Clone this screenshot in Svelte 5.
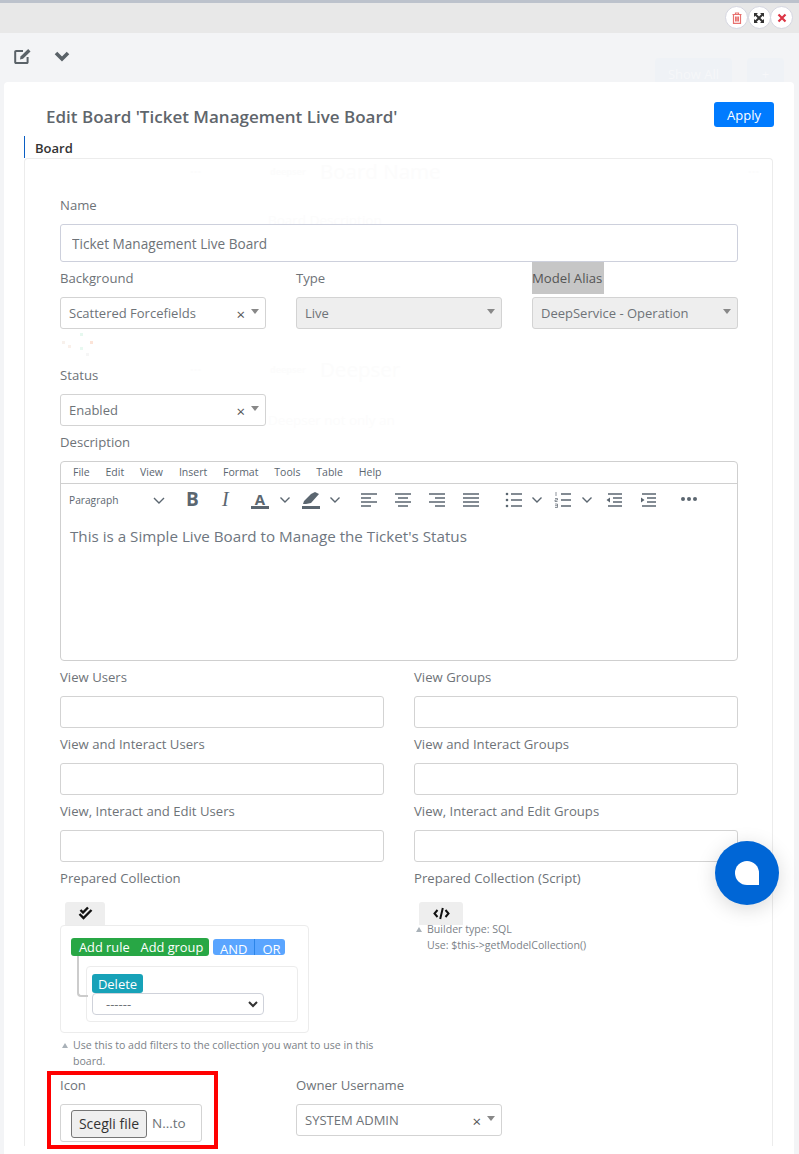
<script>
    const peopleRows = [
        [ 'View Users', 'View Groups' ],
        [ 'View and Interact Users', 'View and Interact Groups' ],
        [ 'View, Interact and Edit Users', 'View, Interact and Edit Groups' ]
    ];

    const menu = [ 'File', 'Edit', 'View', 'Insert', 'Format', 'Tools', 'Table', 'Help' ];

    // Dots of the background preview, barely visible
    const dots = [ [ 20, 0, '#e6f8ef' ], [ 30, 8, '#fce4d8' ], [ 8, 12, '#faf0ea' ], [ 20, 14, '#e8f9f1' ], [ 2, 8, '#f8f1ec' ], [ 26, 20, '#f6f6f6' ] ];
</script>

<div class="page">
    <div class="strip"></div>
    <div class="topbar">
        <button class="round" aria-label="Delete">
            <svg width="12" height="12" viewBox="0 0 12 12" fill="none" stroke="#e8716f" stroke-width="1.2"><path d="M1.5 2.5h9M4.5 2.5V1h3v1.5M2.5 2.5v8.8h7V2.5M4.6 4.5v5M6 4.5v5M7.4 4.5v5"/></svg>
        </button>
        <button class="round" aria-label="Expand">
            <svg width="12" height="12" viewBox="0 0 12 12" fill="#333"><path d="M1 1h4L3.7 2.3 6 4.6 8.3 2.3 7 1h4v4L9.7 3.7 7.4 6l2.3 2.3L11 7v4H7l1.3-1.3L6 7.4 3.7 9.7 5 11H1V7l1.3 1.3L4.6 6 2.3 3.7 1 5z"/></svg>
        </button>
        <button class="round" aria-label="Close">
            <svg width="10" height="10" viewBox="0 0 10 10" stroke="#dc3545" stroke-width="2.2"><path d="M1.5 1.5l7 7M8.5 1.5l-7 7"/></svg>
        </button>
    </div>

    <div class="tools">
        <svg width="18" height="16" viewBox="0 0 18 16" fill="none"><path d="M9 3H2.2A.9.9 0 0 0 1.2 4v10a.9.9 0 0 0 1 1h10.400a.9.9 0 0 0 1-1V9" stroke="#5a6268" stroke-width="2"/><path d="M6.500 8.500l7.700-7.400 2.300 2.300-7.500 7.400-3 .6z" fill="#5a6268"/></svg>
        <svg width="16" height="12" viewBox="0 0 16 12" fill="none"><path d="M2 3l6 6 6-6" stroke="#5a6268" stroke-width="3.600"/></svg>
        <span class="ghost-btn wide">Show All</span>
        <span class="ghost-btn">+</span>
    </div>

    <main class="card">
        <header class="head">
            <h1>Edit Board 'Ticket Management Live Board'</h1>
            <button class="apply">Apply</button>
        </header>

        <div class="legend">Board</div>

        <section class="box">
            <div class="ghosts" aria-hidden="true">
                <span class="g-dots one">...</span>
                <span class="g-dots one end">...</span>
                <span class="g-logo one">deepser</span>
                <span class="g-big one">Board Name</span>
                <span class="g-small one">Board Description</span>
                <span class="g-dots two">...</span>
                <span class="g-logo two">deepser</span>
                <span class="g-big two">Deepser</span>
                <span class="g-small two">Deepser not only an</span>
            </div>

            <div class="field">
                <label for="name">Name</label>
                <input id="name" class="tall" value="Ticket Management Live Board" />
            </div>

            <div class="three">
                <div class="field">
                    <span class="lab">Background</span>
                    <div class="sel">Scattered Forcefields<i class="x">×</i><i class="caret"></i></div>
                </div>
                <div class="field">
                    <span class="lab">Type</span>
                    <div class="sel off">Live<i class="caret"></i></div>
                </div>
                <div class="field">
                    <span class="lab picked">Model Alias</span>
                    <div class="sel off">DeepService - Operation<i class="caret"></i></div>
                </div>
            </div>

            <div class="preview">
                {#each dots as d}
                    <i style="left: {d[0]}px; top: {d[1]}px; background: {d[2]}"></i>
                {/each}
            </div>

            <div class="three">
                <div class="field">
                    <span class="lab">Status</span>
                    <div class="sel">Enabled<i class="x">×</i><i class="caret"></i></div>
                </div>
            </div>

            <div class="field desc">
                <span class="lab">Description</span>
                <div class="editor">
                    <div class="menubar">
                        {#each menu as m}<span>{m}</span>{/each}
                    </div>
                    <div class="toolbar">
                        <span class="para">Paragraph</span>
                        <svg class="chev c-para" width="12" height="8" viewBox="0 0 12 8"><path d="M1 1l5 5 5-5"/></svg>
                        <b class="t-b">B</b>
                        <em class="t-i">I</em>
                        <svg class="ic up" style="left: 189px" width="20" height="22" viewBox="0 -2 20 22"><text x="10" y="14" text-anchor="middle" class="a">A</text><rect x="1" y="15" width="18" height="3" fill="#5b6670"/></svg>
                        <svg class="chev" style="left: 219px" width="10" height="7" viewBox="0 0 10 7"><path d="M.5.5l4.500 4.500L9.500.5"/></svg>
                        <svg class="ic" style="left: 240px" width="20" height="20" viewBox="0 0 20 20" fill="#5b6670"><path d="M2 13l1-3 7-7 4-2 4 2-8 9-5 1zM1 15h18v3H1z"/></svg>
                        <svg class="chev" style="left: 269px" width="10" height="7" viewBox="0 0 10 7"><path d="M.5.5l4.500 4.500L9.500.5"/></svg>

                        <svg class="ic lines" style="left: 299px" width="18" height="16" viewBox="0 0 18 16"><path d="M1 2h16M1 6h10M1 10h16M1 14h10"/></svg>
                        <svg class="ic lines" style="left: 333px" width="18" height="16" viewBox="0 0 18 16"><path d="M1 2h16M4 6h10M1 10h16M4 14h10"/></svg>
                        <svg class="ic lines" style="left: 367px" width="18" height="16" viewBox="0 0 18 16"><path d="M1 2h16M7 6h10M1 10h16M7 14h10"/></svg>
                        <svg class="ic lines" style="left: 401px" width="18" height="16" viewBox="0 0 18 16"><path d="M1 2h16M1 6h16M1 10h16M1 14h16"/></svg>

                        <svg class="ic lines" style="left: 444px" width="18" height="16" viewBox="0 0 18 16"><path d="M6 2h11M6 8h11M6 14h11"/><g class="fillg"><circle cx="2" cy="2" r="1.300"/><circle cx="2" cy="8" r="1.300"/><circle cx="2" cy="14" r="1.300"/></g></svg>
                        <svg class="chev" style="left: 471px" width="10" height="7" viewBox="0 0 10 7"><path d="M.5.5l4.500 4.500L9.500.5"/></svg>
                        <svg class="ic lines" style="left: 493px" width="18" height="16" viewBox="0 0 18 16"><path d="M7 2h10M7 8h10M7 14h10"/><path class="num" d="M2 0v4M1 6.500h2.500v1.500H1v1.500h2.500M1 12h2.500v3.500H1M1 13.700h2.500"/></svg>
                        <svg class="chev" style="left: 521px" width="10" height="7" viewBox="0 0 10 7"><path d="M.5.5l4.500 4.500L9.500.5"/></svg>
                        <svg class="ic lines" style="left: 544px" width="18" height="16" viewBox="0 0 18 16"><path d="M3 2h14M8 6h9M8 10h9M3 14h14"/><path d="M5 5.500L1.500 8 5 10.500z" class="fillp"/></svg>
                        <svg class="ic lines" style="left: 578px" width="18" height="16" viewBox="0 0 18 16"><path d="M3 2h14M8 6h9M8 10h9M3 14h14"/><path d="M2 5.500L5.500 8 2 10.500z" class="fillp"/></svg>
                        <svg class="ic" style="left: 619px" width="18" height="16" viewBox="0 0 18 16" fill="#5b6670"><circle cx="3" cy="8" r="2"/><circle cx="9" cy="8" r="2"/><circle cx="15" cy="8" r="2"/></svg>
                    </div>
                    <p class="content">This is a Simple Live Board to Manage the Ticket's Status</p>
                </div>
            </div>

            {#each peopleRows as row}
                <div class="two-col">
                    {#each row as name}
                        <div class="field">
                            <span class="lab">{name}</span>
                            <input />
                        </div>
                    {/each}
                </div>
            {/each}

            <div class="two-col">
                <div class="field">
                    <span class="lab">Prepared Collection</span>
                    <div class="qb-wrap">
                        <span class="tab t-check">
                            <svg width="15" height="15" viewBox="0 0 15 15" fill="none" stroke="#111" stroke-width="2.400"><path d="M2.500 4l2.500 2.500 5-5M1.500 8l4 4 8-8"/></svg>
                        </span>
                        <div class="qb">
                            <div class="qb-top">
                                <div class="green"><span>Add rule</span><span>Add group</span></div>
                                <div class="blue"><span>AND</span><span>OR</span></div>
                            </div>
                            <div class="qb-rule">
                                <span class="del">Delete</span>
                                <div class="dash">------<svg width="10" height="7" viewBox="0 0 10 7" fill="none" stroke="#333" stroke-width="2"><path d="M1 1l4 4 4-4"/></svg></div>
                            </div>
                        </div>
                    </div>
                    <p class="hint">Use this to add filters to the collection you want to use in this board.</p>
                </div>
                <div class="field">
                    <span class="lab">Prepared Collection (Script)</span>
                    <div class="qb-wrap">
                        <span class="tab t-code">
                            <svg width="17" height="13" viewBox="0 0 17 13" fill="none" stroke="#111" stroke-width="2"><path d="M4.500 3L1.500 6.500l3 3.500M12.500 3l3 3.500-3 3.500M9.800 1L7.200 12"/></svg>
                        </span>
                    </div>
                    <p class="hint tight">Builder type: SQL<br />Use: $this-&gt;getModelCollection()</p>
                </div>
            </div>

            <div class="three last">
                <div class="field marked">
                    <span class="lab">Icon</span>
                    <div class="file"><span class="pick">Scegli file</span><span>N...to</span></div>
                </div>
                <div class="field">
                    <span class="lab">Owner Username</span>
                    <div class="sel">SYSTEM ADMIN<i class="x">×</i><i class="caret"></i></div>
                </div>
            </div>
        </section>
    </main>

    <div class="chat"><i></i></div>
</div>

<style>
    :global(body)
    {
        margin: 0;
        background: #f3f4f6;
    }

    .page
    {
        position: relative;
        width: 799px;
        height: 1154px;
        overflow: hidden;
        font-family: "Open Sans", "Liberation Sans", sans-serif;
        font-size: 13px;
        color: #6e7378;
        background: #f3f4f6;
    }

    .strip
    {
        height: 3px;
        background: #bcc2cc;
    }

    .topbar
    {
        height: 30px;
        display: flex;
        justify-content: flex-end;
        padding: 3px 6px 0 0;
        box-sizing: border-box;
        background: #e8e8e8;
    }

    .round
    {
        width: 23px;
        height: 23px;
        padding: 0;
        margin-left: -.5px;
        display: flex;
        align-items: center;
        justify-content: center;
        background: #fff;
        border: 1px solid #d5d6e0;
        border-radius: 50%;
    }

    .tools
    {
        height: 49px;
        position: relative;
        display: flex;
        align-items: center;
        gap: 22px;
        padding: 0 0 3px 14px;
        box-sizing: border-box;
    }

    .ghost-btn
    {
        position: absolute;
        top: 25px;
        left: 747px;
        width: 37px;
        height: 32px;
        line-height: 32px;
        text-align: center;
        color: #f6f7f9;
        background: #eff2f6;
        border-radius: 4px;
    }

    .ghost-btn.wide
    {
        left: 655px;
        width: 77px;
    }

    .card
    {
        position: relative;
        margin: 0 5px 0 4px;
        height: 1072px;
        padding: 20px 20px 0;
        box-sizing: border-box;
        background: #fff;
        border-radius: 4px 4px 0 0;
    }

    .head
    {
        display: flex;
        justify-content: space-between;
        align-items: flex-start;
        height: 34px;
        padding-left: 22px;
    }

    h1
    {
        margin: 3px 0 0;
        font-size: 17px;
        line-height: 24px;
        font-weight: 600;
        color: #5f666c;
    }

    .apply
    {
        width: 60px;
        height: 25px;
        padding: 0;
        color: #fff;
        font: inherit;
        background: #007bff;
        border: 0;
        border-radius: 3px;
    }

    .legend
    {
        height: 22px;
        padding-left: 10px;
        font-size: 13px;
        line-height: 24px;
        font-weight: 600;
        color: #333;
        border-left: 1px solid #0a5fc4;
    }

    .box
    {
        position: relative;
        height: 988px;
        padding: 36px 34px 0 35px;
        box-sizing: border-box;
        width: 749px;
        border: 1px solid #ececec;
        border-bottom: 0;
        border-radius: 4px 4px 0 0;
    }

    .ghosts span
    {
        position: absolute;
        color: #fcfcfc;
    }

    .g-big
    {
        left: 295px;
        font-size: 20.500px;
    }

    .g-big.one { top: -2px; }
    .g-big.two { top: 196px; }

    .g-small
    {
        left: 243px;
        font-size: 13.500px;
    }

    .g-small.one { top: 52px; }
    .g-small.two { top: 252px; }

    .g-logo
    {
        left: 245px;
        font-size: 9px;
        font-weight: 700;
    }

    .g-logo.one { top: 6px; }
    .g-logo.two { top: 204px; }

    .g-dots
    {
        left: 165px;
        font-weight: 700;
    }

    .g-dots.one { top: 0; }
    .g-dots.two { top: 198px; }
    .g-dots.end { left: 723px; }

    .field
    {
        position: relative;
        display: flex;
        flex-direction: column;
        min-width: 0;
    }

    label, .lab
    {
        height: 29px;
        font-size: 13.150px;
        line-height: 20px;
        color: #6e7378;
    }

    input
    {
        height: 32px;
        padding: 0 11px;
        box-sizing: border-box;
        font: inherit;
        color: #6e7378;
        background: #fff;
        border: 1px solid #d3d3d3;
        border-radius: 3px;
    }

    input.tall
    {
        height: 38px;
        padding-top: 1px;
        font-size: 13.600px;
        border-color: #cdd0dc;
    }

    .three
    {
        display: grid;
        grid-template-columns: repeat(3, 206px);
        gap: 30px;
        margin-top: 6px;
    }

    .picked
    {
        align-self: flex-start;
        position: relative;
        height: 32px;
        margin: -6px 0 3px;
        padding: 6px 0 0;
        box-sizing: border-box;
        width: 72px;
        white-space: nowrap;
        color: #555;
        background: #c6c6c6;
    }

    .sel
    {
        position: relative;
        height: 32px;
        padding-left: 8px;
        box-sizing: border-box;
        line-height: 30px;
        white-space: nowrap;
        color: #6e7378;
        background: #fff;
        border: 1px solid #d3d3d3;
        border-radius: 3px;
    }

    .sel.off
    {
        background: #eee;
    }

    .x
    {
        position: absolute;
        right: 20px;
        top: 1px;
        font-style: normal;
        font-size: 15px;
        color: #555;
    }

    .caret
    {
        position: absolute;
        right: 6px;
        top: 11px;
        border: 4.500px solid transparent;
        border-top: 5px solid #888;
        border-bottom: 0;
    }

    .preview
    {
        position: relative;
        height: 24px;
        width: 40px;
        margin: 4px 0 0 0;
    }

    .preview i
    {
        position: absolute;
        width: 3px;
        height: 3px;
    }

    .three + .preview + .three
    {
        margin-top: 8px;
    }

    .desc
    {
        margin-top: 6px;
    }

    .editor
    {
        height: 200px;
        box-sizing: border-box;
        background: #fff;
        border: 1px solid #cfcfcf;
        border-radius: 4px;
    }

    .menubar
    {
        display: flex;
        height: 21px;
        gap: 15.900px;
        padding-left: 12px;
        font-size: 10.500px;
        line-height: 21px;
        color: #5b6670;
        border-bottom: 1px solid #d0d0d0;
    }

    .toolbar
    {
        position: relative;
        height: 32px;
    }

    .para
    {
        position: absolute;
        left: 8px;
        top: 8px;
        font-size: 10.200px;
        line-height: 16px;
        color: #5b6670;
    }

    .ic, .chev
    {
        position: absolute;
        top: 7px;
    }

    .ic.up
    {
        top: 5px;
    }

    .chev
    {
        top: 13px;
        fill: none;
        stroke: #5b6670;
        stroke-width: 1.400;
    }

    .c-para
    {
        left: 92px;
    }

    .t-b, .t-i
    {
        position: absolute;
        top: 2px;
        font-size: 19px;
        line-height: 26px;
        color: #5b6670;
    }

    .t-b
    {
        left: 125px;
        font-weight: 700;
    }

    .t-i
    {
        left: 161px;
        font-family: "Liberation Serif", serif;
        font-size: 20px;
    }

    .a
    {
        font-size: 15px;
        font-weight: 700;
        fill: #5b6670;
    }

    .lines
    {
        top: 8px;
        fill: none;
        stroke: #5b6670;
        stroke-width: 1.700;
    }

    .fillg, .fillp
    {
        fill: #5b6670;
        stroke: none;
    }

    .num
    {
        stroke-width: .7;
    }

    .content
    {
        margin: 10px 0 0 9px;
        font-size: 15.200px;
        line-height: 20px;
        color: #6e7680;
    }

    .two-col
    {
        display: grid;
        grid-template-columns: 324px 324px;
        gap: 30px;
        margin-top: 6px;
    }

    .qb-wrap
    {
        min-height: 23px;
        margin-top: 5px;
    }

    .tab
    {
        display: flex;
        align-items: center;
        justify-content: center;
        width: 40px;
        height: 23px;
        background: #eee;
        border-radius: 3px 3px 0 0;
    }

    .t-check
    {
        margin-left: 5px;
    }

    .t-code
    {
        width: 44px;
        margin-left: 5px;
    }

    .qb
    {
        width: 249px;
        height: 108px;
        padding: 12px 10px 0;
        box-sizing: border-box;
        position: relative;
        background: #fff;
        border: 1px solid #ececec;
        border-radius: 4px;
    }

    .qb-top
    {
        display: flex;
        gap: 4px;
    }

    .green
    {
        display: flex;
        gap: 11px;
        height: 18px;
        width: 138px;
        padding-left: 8px;
        box-sizing: border-box;
        font-size: 12.800px;
        line-height: 19px;
        color: #fff;
        white-space: nowrap;
        background: #28a745;
        border-radius: 3px;
    }

    .blue
    {
        display: flex;
        height: 16px;
        width: 72px;
        margin-top: 1px;
        font-size: 13px;
        line-height: 20px;
        color: #fff;
        background: #5aa5ff;
        border-radius: 3px;
    }

    .blue span
    {
        padding: 0 7px;
    }

    .blue span:first-child
    {
        border-right: 1px solid #2c85e8;
    }

    .qb-rule
    {
        position: relative;
        width: 212px;
        height: 56px;
        margin: 10px 0 0 15px;
        padding-left: 5px;
        box-sizing: border-box;
        background: #fff;
        border: 1px solid #ececec;
        border-radius: 4px;
    }

    .qb-rule::before
    {
        content: "";
        position: absolute;
        left: -10px;
        top: -11px;
        width: 9px;
        height: 39px;
        border-left: 2px solid #ccc;
        border-bottom: 2px solid #ccc;
        border-radius: 0 0 0 4px;
    }

    .del
    {
        display: block;
        width: 51px;
        height: 19px;
        margin-top: 7px;
        font-size: 13px;
        line-height: 20px;
        text-align: center;
        color: #fff;
        background: #17a2b8;
        border-radius: 3px;
    }

    .dash
    {
        display: flex;
        align-items: center;
        justify-content: space-between;
        width: 172px;
        height: 22px;
        padding: 0 5px 0 13px;
        box-sizing: border-box;
        line-height: 24px;
        background: #fff;
        border: 1px solid #cfd2da;
        border-radius: 4px;
    }

    .hint
    {
        position: relative;
        margin: 4px 0 0;
        padding-left: 13px;
        font-size: 10.600px;
        line-height: 16px;
        color: #7c8288;
    }

    .hint.tight
    {
        margin-top: -4px;
    }

    .hint::before
    {
        content: "";
        position: absolute;
        left: 2px;
        top: 6px;
        border: 3px solid transparent;
        border-bottom: 5px solid #a9b1b8;
        border-top: 0;
    }

    .last
    {
        margin-top: 6px;
    }

    .marked::before
    {
        content: "";
        position: absolute;
        left: -13px;
        top: -4px;
        width: 171px;
        height: 78px;
        border: 4px solid #f00;
        box-sizing: border-box;
    }

    .last .field:first-child
    {
        width: 142px;
    }

    .file
    {
        display: flex;
        align-items: center;
        gap: 5px;
        width: 142px;
        height: 38px;
        padding-left: 10px;
        box-sizing: border-box;
        color: #6e7378;
        font-size: 13.500px;
        background: #fff;
        border: 1px solid #d3d3d3;
        border-radius: 3px;
    }

    .pick
    {
        width: 76px;
        height: 28px;
        margin-top: 2px;
        box-sizing: border-box;
        text-align: center;
        line-height: 26px;
        white-space: nowrap;
        font-size: 14px;
        color: #333;
        background: #efefef;
        border: 1px solid #767676;
        border-radius: 3px;
    }

    .chat
    {
        position: absolute;
        left: 715px;
        top: 841px;
        width: 64px;
        height: 64px;
        display: flex;
        align-items: center;
        justify-content: center;
        background: #0066d6;
        border-radius: 50%;
        box-shadow: 0 4px 20px rgba(0, 0, 0, .15);
    }

    .chat i
    {
        width: 24px;
        height: 24px;
        background: #fff;
        border-radius: 50% 50% 0 50%;
    }
</style>
